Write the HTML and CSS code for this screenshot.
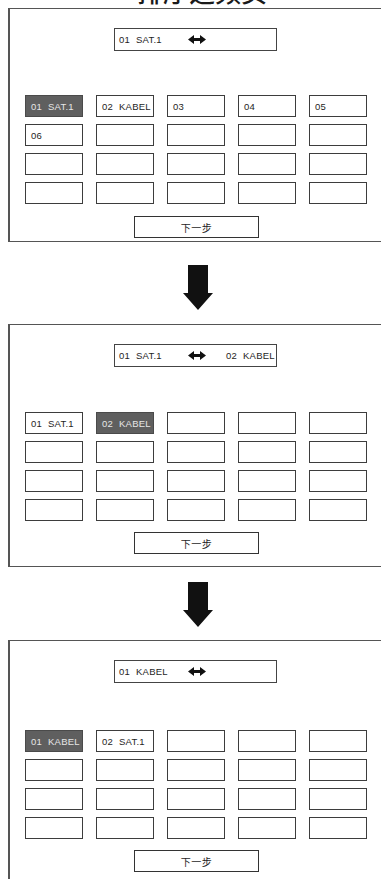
FILE: index.html
```html
<!DOCTYPE html>
<html lang="zh">
<head>
<meta charset="utf-8">
<title>排序选频页</title>
<link rel="stylesheet" href="styles.css">
</head>
<body>
<div class="title"><span>排序选频页</span></div>

<section class="panel panel-a">
  <div class="swap">
    <span class="swap-a">01 SAT.1</span>
    <svg class="swap-icon" viewBox="0 0 18 9"><polygon points="0,4.5 6,0 6,3 12,3 12,0 18,4.5 12,9 12,6 6,6 6,9"/></svg>
  </div>
  <div class="grid">
    <div class="cell is-active">01 SAT.1</div>
    <div class="cell">02 KABEL</div>
    <div class="cell">03</div>
    <div class="cell">04</div>
    <div class="cell">05</div>
    <div class="cell">06</div>
    <div class="cell"></div><div class="cell"></div><div class="cell"></div><div class="cell"></div>
    <div class="cell"></div><div class="cell"></div><div class="cell"></div><div class="cell"></div><div class="cell"></div>
    <div class="cell"></div><div class="cell"></div><div class="cell"></div><div class="cell"></div><div class="cell"></div>
  </div>
  <div class="next">下一步</div>
</section>

<div class="step step-a">
  <svg class="step-icon" viewBox="0 0 30 45"><polygon points="5,0 25,0 25,28 30,28 15,45 0,28 5,28"/></svg>
</div>

<section class="panel panel-b">
  <div class="swap">
    <span class="swap-a">01 SAT.1</span>
    <svg class="swap-icon" viewBox="0 0 18 9"><polygon points="0,4.5 6,0 6,3 12,3 12,0 18,4.5 12,9 12,6 6,6 6,9"/></svg>
    <span class="swap-b">02 KABEL</span>
  </div>
  <div class="grid">
    <div class="cell">01 SAT.1</div>
    <div class="cell is-active">02 KABEL</div>
    <div class="cell"></div><div class="cell"></div><div class="cell"></div>
    <div class="cell"></div><div class="cell"></div><div class="cell"></div><div class="cell"></div><div class="cell"></div>
    <div class="cell"></div><div class="cell"></div><div class="cell"></div><div class="cell"></div><div class="cell"></div>
    <div class="cell"></div><div class="cell"></div><div class="cell"></div><div class="cell"></div><div class="cell"></div>
  </div>
  <div class="next">下一步</div>
</section>

<div class="step step-b">
  <svg class="step-icon" viewBox="0 0 30 45"><polygon points="5,0 25,0 25,28 30,28 15,45 0,28 5,28"/></svg>
</div>

<section class="panel panel-c">
  <div class="swap">
    <span class="swap-a">01 KABEL</span>
    <svg class="swap-icon" viewBox="0 0 18 9"><polygon points="0,4.5 6,0 6,3 12,3 12,0 18,4.5 12,9 12,6 6,6 6,9"/></svg>
  </div>
  <div class="grid">
    <div class="cell is-active">01 KABEL</div>
    <div class="cell">02 SAT.1</div>
    <div class="cell"></div><div class="cell"></div><div class="cell"></div>
    <div class="cell"></div><div class="cell"></div><div class="cell"></div><div class="cell"></div><div class="cell"></div>
    <div class="cell"></div><div class="cell"></div><div class="cell"></div><div class="cell"></div><div class="cell"></div>
    <div class="cell"></div><div class="cell"></div><div class="cell"></div><div class="cell"></div><div class="cell"></div>
  </div>
  <div class="next">下一步</div>
</section>
</body>
</html>
```
FILE: styles.css
```css
html, body {
  margin: 0;
  padding: 0;
  background: #fff;
  overflow: hidden;
}

body {
  font-family: "Liberation Sans", "Noto Sans CJK SC", sans-serif;
  color: #1e1e1e;
}

.title {
  height: 8px;
  display: flex;
  justify-content: center;
  align-items: flex-end;
  padding-left: 23px;
  font-family: "Noto Sans CJK SC", sans-serif;
  font-size: 26px;
  line-height: 26px;
  font-weight: 500;
  color: #1a1a1a;
}

.title span {
  margin-bottom: 4px;
}

.panel {
  box-sizing: border-box;
  width: 377px;
  margin-left: 8px;
  border: 1px solid #555;
  border-left-width: 2px;
  padding: 19px 0 3px 15px;
}

.panel-b {
  padding-bottom: 12px;
}

.panel-c {
  padding-bottom: 12px;
}

.swap {
  box-sizing: border-box;
  width: 163px;
  height: 23px;
  margin-left: 89px;
  border: 1px solid #444;
  display: flex;
  align-items: center;
  padding-left: 4px;
  font-size: 9.5px;
  letter-spacing: 0.25px;
  word-spacing: 3px;
  white-space: nowrap;
}

.swap-a {
  width: 69px;
}

.swap-icon {
  display: block;
  width: 18px;
  height: 9px;
  fill: #111;
}

.swap-b {
  margin-left: 20px;
}

.grid {
  display: grid;
  grid-template-columns: repeat(5, 58px);
  grid-auto-rows: 22px;
  column-gap: 13px;
  row-gap: 7px;
  margin-top: 44px;
}

.panel-b .grid {
  margin-top: 45px;
}

.panel-c .grid {
  margin-top: 47px;
}

.cell {
  box-sizing: border-box;
  border: 1px solid #3d3d3d;
  padding-left: 5px;
  display: flex;
  align-items: center;
  font-size: 9.5px;
  letter-spacing: 0.25px;
  word-spacing: 3px;
  white-space: nowrap;
}

.cell.is-active {
  background: #5f5f5f;
  color: #e6e6e6;
  border-color: #4a4a4a;
}

.next {
  box-sizing: border-box;
  width: 125px;
  height: 22px;
  margin: 12px 0 0 109px;
  border: 1px solid #333;
  display: flex;
  align-items: center;
  justify-content: center;
  font-family: "Noto Sans CJK SC", sans-serif;
  font-size: 10px;
  letter-spacing: 0.5px;
}

.panel-b .next,
.panel-c .next {
  margin-top: 11px;
}

.step {
  box-sizing: border-box;
  width: 377px;
  margin-left: 8px;
  display: flex;
  justify-content: center;
  padding: 23px 0 14px 3px;
}

.step-b {
  padding-top: 15px;
  padding-bottom: 13px;
}

.step-icon {
  display: block;
  width: 30px;
  height: 45px;
  fill: #111;
}
```
